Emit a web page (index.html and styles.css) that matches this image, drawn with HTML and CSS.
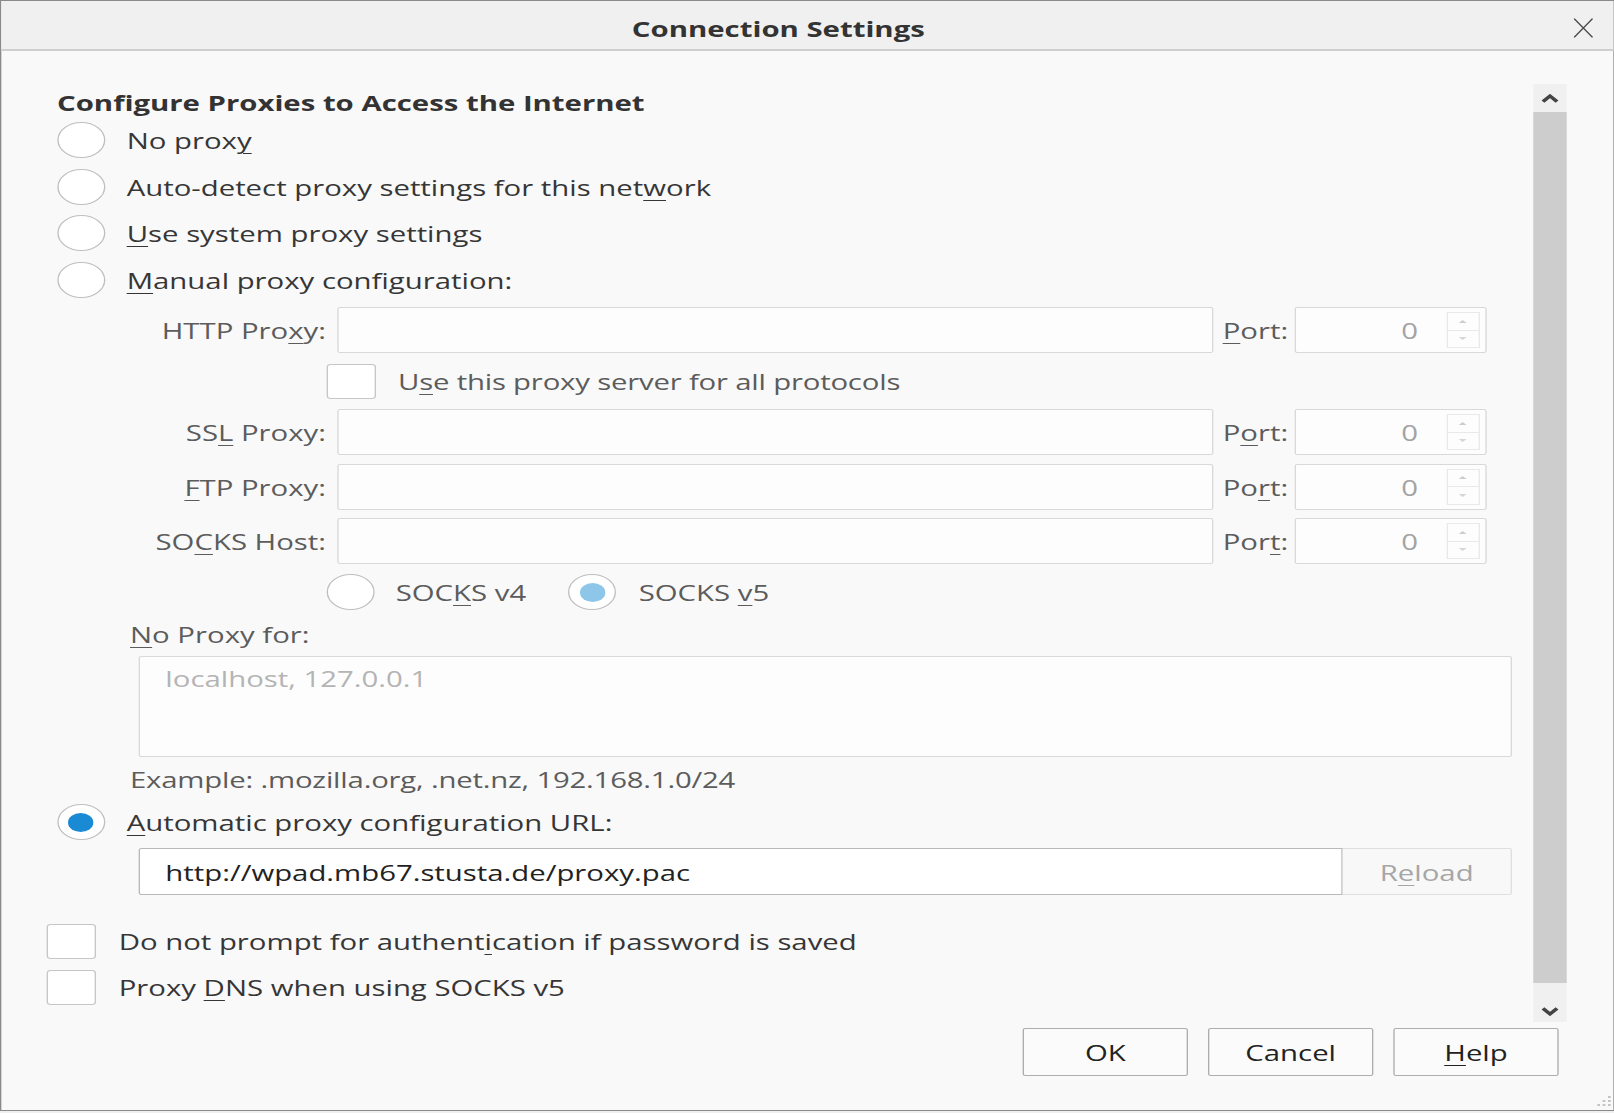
FILE: index.html
```html
<!DOCTYPE html>
<html lang="en">
<head>
<meta charset="utf-8">
<title>Connection Settings</title>
<link rel="stylesheet" href="styles.css">
</head>
<body>
<div class="window">
  <div class="titlebar">
    <div class="title">Connection Settings</div>
    <div class="close">
      <svg width="15" height="20" viewBox="0 0 15 20"><path d="M0.6 0.6 L14.4 19.4 M14.4 0.6 L0.6 19.4" stroke="#4a4a4a" stroke-width="1.1" fill="none"/></svg>
    </div>
  </div>
  <div class="body">
    <div class="scrollwrap">
      <div class="content">
        <div class="heading">Configure Proxies to Access the Internet</div>
        <div class="radio-row"><span class="radio"></span><span class="lbl">No prox<u>y</u></span></div>
        <div class="radio-row"><span class="radio"></span><span class="lbl">Auto-detect proxy settings for this net<u>w</u>ork</span></div>
        <div class="radio-row"><span class="radio"></span><span class="lbl"><u>U</u>se system proxy settings</span></div>
        <div class="radio-row"><span class="radio"></span><span class="lbl"><u>M</u>anual proxy configuration:</span></div>

        <div class="field-row first">
          <span class="flabel">HTTP Pro<u>x</u>y:</span>
          <span class="input"></span>
          <span class="plabel"><u>P</u>ort:</span>
          <span class="port"><span class="pval">0</span><span class="spin"><span class="up"></span><span class="down"></span></span></span>
        </div>
        <div class="sub-check"><span class="checkbox"></span><span class="narrow">U<u>s</u>e this proxy server for all protocols</span></div>
        <div class="field-row">
          <span class="flabel">SS<u>L</u> Proxy:</span>
          <span class="input"></span>
          <span class="plabel">P<u>o</u>rt:</span>
          <span class="port"><span class="pval">0</span><span class="spin"><span class="up"></span><span class="down"></span></span></span>
        </div>
        <div class="field-row spaced">
          <span class="flabel"><u>F</u>TP Proxy:</span>
          <span class="input"></span>
          <span class="plabel">Po<u>r</u>t:</span>
          <span class="port"><span class="pval">0</span><span class="spin"><span class="up"></span><span class="down"></span></span></span>
        </div>
        <div class="field-row spaced">
          <span class="flabel">SO<u>C</u>KS Host:</span>
          <span class="input"></span>
          <span class="plabel">Por<u>t</u>:</span>
          <span class="port"><span class="pval">0</span><span class="spin"><span class="up"></span><span class="down"></span></span></span>
        </div>
        <div class="socks-row">
          <span class="socks-opt v4"><span class="radio"></span><span>SOC<u>K</u>S v4</span></span>
          <span class="socks-opt v5"><span class="radio on dim"></span><span>SOCKS <u>v</u>5</span></span>
        </div>
        <div class="noproxy-label"><u>N</u>o Proxy for:</div>
        <div class="textarea">localhost, 127.0.0.1</div>
        <div class="example narrow">Example: .mozilla.org, .net.nz, 192.168.1.0/24</div>
        <div class="radio-row auto"><span class="radio on"></span><span class="lbl"><u>A</u>utomatic proxy configuration URL:</span></div>
        <div class="url-row">
          <span class="url">http://wpad.mb67.stusta.de/proxy.pac</span>
          <span class="reload">R<u>e</u>load</span>
        </div>
        <div class="cb-row top"><span class="checkbox"></span><span>Do not prompt for authent<u>i</u>cation if password is saved</span></div>
        <div class="cb-row"><span class="checkbox"></span><span>Proxy <u>D</u>NS when using SOCKS v5</span></div>
      </div>
      <div class="scrollbar">
        <div class="sb-up"><svg width="13" height="9" viewBox="0 0 13 9"><polyline points="1.2,7.6 6.5,2 11.8,7.6" fill="none" stroke="#444" stroke-width="3"/></svg></div>
        <div class="sb-thumb"></div>
        <div class="sb-down"><svg width="13" height="9" viewBox="0 0 13 9"><polyline points="1.2,1.4 6.5,7 11.8,1.4" fill="none" stroke="#444" stroke-width="3"/></svg></div>
      </div>
    </div>
    <div class="buttons">
      <span class="btn">OK</span>
      <span class="btn">Cancel</span>
      <span class="btn"><u>H</u>elp</span>
    </div>
  </div>
  <svg class="grip" width="14" height="14" viewBox="0 0 14 14">
    <rect x="11" y="1" width="2" height="2" fill="#c4c4c4"/>
    <rect x="7" y="5" width="2" height="2" fill="#c4c4c4"/>
    <rect x="11" y="5" width="2" height="2" fill="#c4c4c4"/>
    <rect x="3" y="9" width="2" height="2" fill="#c4c4c4"/>
    <rect x="7" y="9" width="2" height="2" fill="#c4c4c4"/>
    <rect x="11" y="9" width="2" height="2" fill="#c4c4c4"/>
  </svg>
</div>
</body>
</html>
```

FILE: styles.css
```css
* { box-sizing: border-box; }
html, body { margin: 0; padding: 0; overflow: hidden; height: 100%; }
html { background: #f0f0f0; }
body {
  font-family: "Open Sans", "DejaVu Sans", sans-serif;
  font-size: 22px;
  color: #363636;
}
u { text-decoration-thickness: 1px; text-underline-offset: 4px; }
.narrow { letter-spacing: -0.15px; }

/* the whole dialog is drawn horizontally stretched, as in the capture */
.window {
  width: 1210.5px;
  height: 1111px;
  border: 1px solid #8a8a8a;
  background: #f9f9f9;
  transform: scaleX(1.333333);
  transform-origin: 0 0;
  display: flex;
  flex-direction: column;
  position: relative;
}

.titlebar {
  flex: none;
  height: 50px;
  background: #f0f0f0;
  border-bottom: 2px solid #cfcfcf;
  display: flex;
  align-items: center;
}
.title {
  flex: 1;
  text-align: center;
  font-weight: 700;
  color: #333;
  line-height: 30px;
  padding-top: 5px;
}
.close {
  width: 43px;
  height: 48px;
  display: flex;
  align-items: center;
  justify-content: center;
  padding-top: 6px;
  padding-right: 1.5px;
}

.body {
  flex: 1;
  display: flex;
  flex-direction: column;
  padding-top: 33px;
}
.scrollwrap {
  flex: none;
  height: 938px;
  display: flex;
}
.content {
  flex: 1;
  padding-left: 34px;
}

.heading {
  margin: 3px 0 0 7.75px;
  height: 30px;
  line-height: 30px;
  font-weight: 700;
  color: #333;
}

.radio-row {
  height: 46.5px;
  display: flex;
  align-items: center;
  margin-left: 7.75px;
  white-space: nowrap;
}
.radio-row.auto { height: 42px; }
.radio {
  flex: none;
  width: 36px;
  height: 36px;
  border-radius: 50%;
  border: 1px solid #bfbfbf;
  background: #fff;
  margin-right: 16.25px;
  display: flex;
  align-items: center;
  justify-content: center;
}
.radio.on::after {
  content: "";
  width: 19px;
  height: 19px;
  border-radius: 50%;
  background: #1a8ad5;
}
.radio.on.dim::after { background: #8ec6e9; }

.field-row {
  display: grid;
  grid-template-columns: 217.75px 657px 61.25px 144px;
  height: 46px;
  color: #5c5c5c;
}
.field-row.first { margin-top: 4px; }
.field-row.spaced { margin-top: 8.5px; }
.flabel {
  align-self: center;
  text-align: right;
  padding-right: 8.25px;
  white-space: nowrap;
}
.plabel {
  align-self: center;
  padding-left: 7.25px;
}
.input {
  border: 1px solid #d9d9d9;
  border-radius: 2px;
  background: #fdfdfd;
}
.port {
  border: 1px solid #d9d9d9;
  border-radius: 2px;
  background: #fdfdfd;
  display: flex;
  align-items: center;
}
.pval {
  flex: 1;
  text-align: right;
  padding-right: 21px;
  color: #a3a3a3;
}
.spin {
  flex: none;
  width: 25.5px;
  align-self: stretch;
  margin: 4px 4px 4px 0;
  border: 1px solid #e9e9e9;
  display: flex;
  flex-direction: column;
}
.spin span {
  flex: 1;
  display: flex;
  align-items: center;
  justify-content: center;
}
.spin .down { border-top: 1px solid #e9e9e9; }
.spin .up::after {
  content: "";
  border-left: 3px solid transparent;
  border-right: 3px solid transparent;
  border-bottom: 3px solid #cdcdcd;
}
.spin .down::after {
  content: "";
  border-left: 3px solid transparent;
  border-right: 3px solid transparent;
  border-top: 3px solid #d6d6d6;
}

.sub-check {
  height: 56px;
  display: flex;
  align-items: center;
  margin-left: 210.25px;
  color: #5c5c5c;
  white-space: nowrap;
}
.checkbox {
  flex: none;
  width: 37px;
  height: 35px;
  border: 1px solid #c6c6c6;
  border-radius: 3px;
  background: #fff;
  margin-right: 16.25px;
}

.socks-row {
  height: 56px;
  display: flex;
  align-items: center;
  margin-left: 209.5px;
  color: #5c5c5c;
  white-space: nowrap;
}
.socks-opt {
  display: flex;
  align-items: center;
}
.socks-opt.v4 { width: 181.5px; }
.socks-opt.v5 .radio { margin-right: 17px; }

.noproxy-label {
  margin-left: 62.5px;
  height: 28px;
  line-height: 28px;
  color: #5c5c5c;
}
.textarea {
  margin: 8px 0 0 69px;
  width: 1030px;
  height: 101px;
  border: 1px solid #d9d9d9;
  border-radius: 2px;
  background: #fdfdfd;
  padding: 6px 0 0 19px;
  line-height: 30px;
  color: #b4b4b4;
}
.example {
  margin-left: 62.5px;
  height: 44px;
  line-height: 44px;
  color: #5c5c5c;
}

.url-row {
  margin: 5px 0 0 69px;
  height: 47px;
  display: flex;
}
.url {
  width: 903px;
  border: 1px solid #b9b9b9;
  border-radius: 2px 0 0 2px;
  background: #fff;
  padding-left: 19px;
  display: flex;
  align-items: center;
  color: #222;
}
.reload {
  width: 127px;
  border: 1px solid #dfdfdf;
  border-left: none;
  border-radius: 0 2px 2px 0;
  background: #f8f8f8;
  color: #a6a6a6;
  display: flex;
  align-items: center;
  justify-content: center;
}

.cb-row {
  height: 46px;
  display: flex;
  align-items: center;
  white-space: nowrap;
}
.cb-row.top { margin-top: 23px; }
.cb-row .checkbox { margin-right: 17px; }

.scrollbar {
  flex: none;
  width: 25px;
  margin-right: 34.5px;
  background: #f0f0f0;
  display: flex;
  flex-direction: column;
}
.sb-up {
  height: 28px;
  display: flex;
  align-items: center;
  justify-content: center;
}
.sb-thumb {
  flex: 1;
  background: #cdcdcd;
}
.sb-down {
  height: 39px;
  display: flex;
  align-items: flex-end;
  justify-content: center;
  padding-bottom: 6px;
}

.buttons {
  display: flex;
  justify-content: flex-end;
  gap: 15px;
  padding-right: 40.5px;
  margin-top: 6px;
}
.btn {
  width: 124px;
  height: 48px;
  border: 1px solid #adadad;
  border-radius: 2px;
  background: #fbfbfb;
  color: #222;
  display: flex;
  align-items: center;
  justify-content: center;
}

.grip {
  position: absolute;
  right: 1px;
  bottom: 1px;
}
```
